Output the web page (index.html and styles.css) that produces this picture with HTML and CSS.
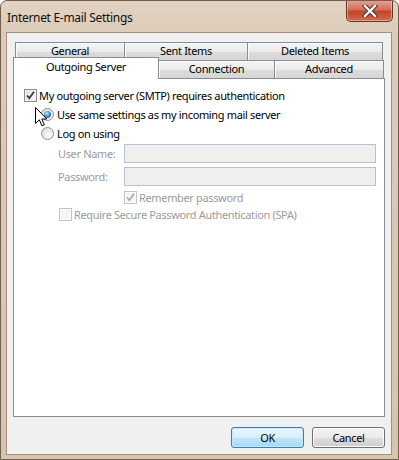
FILE: index.html
```html
<!DOCTYPE html>
<html>
<head>
<meta charset="utf-8">
<title>Internet E-mail Settings</title>
<link rel="stylesheet" href="styles.css">
</head>
<body>
<div class="window">
  <div class="titlebar">
    <span class="title">Internet E-mail Settings</span>
    <div class="close">
      <svg width="16" height="12" viewBox="0 0 16 12">
        <path d="M3 1 L13 11 M13 1 L3 11" stroke="#3a2a2a" stroke-width="4.2" stroke-linecap="square"/>
        <path d="M3 1 L13 11 M13 1 L3 11" stroke="#ffffff" stroke-width="2.4" stroke-linecap="square"/>
      </svg>
    </div>
  </div>
  <div class="client">
    <div class="tabs">
      <div class="tabrow back">
        <div class="tab t-general">General</div>
        <div class="tab t-sent">Sent Items</div>
        <div class="tab t-deleted">Deleted Items</div>
      </div>
      <div class="tabrow front">
        <div class="tab selected">Outgoing Server</div>
        <div class="tab t-conn">Connection</div>
        <div class="tab t-adv">Advanced</div>
      </div>
    </div>
    <div class="panel">
      <div class="row r-auth">
        <span class="check">
          <svg width="11" height="11" viewBox="0 0 11 11"><path d="M2 5.5 L4.3 8.2 L9 1.8" fill="none" stroke="#2b3a63" stroke-width="1.8"/></svg>
        </span>
        <span class="lbl">My outgoing server (SMTP) requires authentication</span>
      </div>
      <div class="row r-radio">
        <span class="radio on"><span class="dot"></span></span>
        <span class="lbl">Use same settings as my incoming mail server</span>
      </div>
      <div class="row r-radio">
        <span class="radio"></span>
        <span class="lbl">Log on using</span>
      </div>
      <div class="row r-field r-user">
        <span class="flabel">User Name:</span>
        <span class="input"></span>
      </div>
      <div class="row r-field r-pass">
        <span class="flabel">Password:</span>
        <span class="input"></span>
      </div>
      <div class="row r-small r-remember">
        <span class="check disabled">
          <svg width="11" height="11" viewBox="0 0 11 11"><path d="M2 5.5 L4.3 8.2 L9 1.8" fill="none" stroke="#a9a9a9" stroke-width="1.6"/></svg>
        </span>
        <span class="lbl dim">Remember password</span>
      </div>
      <div class="row r-small r-spa">
        <span class="check disabled"></span>
        <span class="lbl dim">Require Secure Password Authentication (SPA)</span>
      </div>
    </div>
    <div class="buttons">
      <div class="btn default">OK</div>
      <div class="btn">Cancel</div>
    </div>
  </div>
  <svg class="cursor" width="13" height="20" viewBox="0 0 13 20">
    <path d="M0.5 0.5 L0.5 16.5 L4.3 12.8 L6.9 18.8 L9.3 17.8 L6.8 12 L11.8 12 Z" fill="#ffffff" stroke="#000000" stroke-width="1" stroke-linejoin="miter"/>
  </svg>
</div>
</body>
</html>
```

FILE: styles.css
```css
* { box-sizing: border-box; }
html, body { margin: 0; padding: 0; background: #ffffff; }
body {
  font-family: "Noto Sans", "Open Sans", sans-serif;
  font-size: 11px;
  letter-spacing: -0.35px;
  color: #000000;
}
.window {
  position: relative;
  width: 399px;
  height: 460px;
  display: flex;
  flex-direction: column;
  padding: 0 6px 4px 5px;
  border-radius: 7px 7px 0 0;
  border: 1px solid #6f6152;
  background:
    linear-gradient(to bottom, #e2d3c2 0px, #dccbb8 32px, #d7c4ae 100%);
  overflow: hidden;
}
.titlebar {
  position: relative;
  height: 31px;
  display: flex;
  align-items: center;
  padding-left: 1px;
}
.title {
  font-size: 12px;
  letter-spacing: -0.3px;
  color: #111;
  margin-top: 2px;
}
.close {
  position: absolute;
  right: -1px;
  top: -1px;
  width: 47px;
  height: 22px;
  border: 1px solid #5b3a30;
  border-top: none;
  border-radius: 0 0 5px 5px;
  background: linear-gradient(to bottom, #e8a393 0%, #d3705a 45%, #c4442b 55%, #cf6b4d 100%);
  box-shadow: inset 0 0 0 1px rgba(255,220,200,0.5);
  display: flex;
  align-items: center;
  justify-content: center;
}
.client {
  flex: 1;
  background: #f0f0f0;
  border: 1px solid #a3917e;
  padding: 9px 6px 0 6px;
  display: flex;
  flex-direction: column;
}
.tabs {
  height: 36px;
  display: flex;
  flex-direction: column;
}
.tabrow {
  display: flex;
  height: 18px;
}
.tabrow.back { padding-left: 2px; }
.tabrow.front { align-items: flex-end; }
.tab {
  height: 18px;
  border: 1px solid #898c95;
  border-bottom: none;
  background: linear-gradient(to bottom, #f4f4f4 0%, #ebebeb 50%, #dcdcdc 51%, #d6d6d6 100%);
  box-shadow: inset 1px 1px 0 #fbfbfb;
  text-align: center;
  line-height: 16px;
  margin-left: -1px;
  flex: none;
}
.tabrow .tab:first-child { margin-left: 0; }
.t-general { width: 110px; }
.t-sent { width: 124px; }
.t-deleted { width: 136px; }
.t-conn { width: 117px; }
.t-adv { width: 110px; }
.tab.selected {
  width: 146px;
  height: 22px;
  margin-bottom: -1px;
  background: #ffffff;
  box-shadow: none;
  position: relative;
  z-index: 2;
  line-height: 18px;
}
.panel {
  height: 339px;
  background: #ffffff;
  border: 1px solid #898c95;
  padding: 7px 0 0 10px;
  display: flex;
  flex-direction: column;
  position: relative;
  z-index: 1;
}
.row {
  display: flex;
  align-items: center;
  height: 19px;
}
.r-radio { padding-left: 17px; }
.r-field { padding-left: 34px; height: 19px; }
.r-user { margin-top: 1px; }
.r-pass { margin-top: 4px; }
.r-small { height: 17px; }
.r-remember { margin-top: 3px; padding-left: 100px; }
.r-spa { padding-left: 35px; }
.check {
  width: 13px;
  height: 13px;
  border: 1px solid #8e8f8f;
  background: linear-gradient(135deg, #d9dadb 0%, #f3f3f3 60%, #fbfbfb 100%);
  box-shadow: inset 0 0 0 1px #f2f2f2;
  display: flex;
  align-items: center;
  justify-content: center;
  flex: none;
  margin-right: 2px;
}
.check.disabled {
  border-color: #c3c3c3;
  background: #f4f4f4;
  box-shadow: inset 0 0 0 1px #fbfbfb;
}
.radio {
  width: 13px;
  height: 13px;
  border-radius: 50%;
  border: 1px solid #8e8f8f;
  background: radial-gradient(circle at 65% 70%, #fdfdfd 0%, #e8e8e8 55%, #cfcfcf 100%);
  display: flex;
  align-items: center;
  justify-content: center;
  flex: none;
  margin-right: 3px;
}
.radio .dot {
  width: 7px;
  height: 7px;
  border-radius: 50%;
  background: radial-gradient(circle at 40% 35%, #bfe6fb 0%, #3b8ad2 50%, #1c4f8a 100%);
}
.lbl { white-space: nowrap; }
.lbl.dim, .flabel { color: #9b9b9b; }
.flabel { width: 66px; flex: none; }
.input {
  width: 252px;
  height: 19px;
  border: 1px solid #b6c2d2;
  background: #efefef;
  flex: none;
}
.buttons {
  display: flex;
  justify-content: flex-end;
  gap: 8px;
  margin-top: 10px;
}
.btn {
  width: 73px;
  height: 21px;
  border: 1px solid #707070;
  border-radius: 3px;
  background: linear-gradient(to bottom, #f2f2f2 0%, #ebebeb 50%, #dddddd 51%, #cfcfcf 100%);
  box-shadow: inset 0 0 0 1px #fcfcfc;
  text-align: center;
  line-height: 19px;
}
.btn.default {
  border-color: #3c7fb1;
  background: linear-gradient(to bottom, #eaf6fd 0%, #d9f0fc 50%, #bee6fd 51%, #a7d9f5 100%);
  box-shadow: inset 0 0 0 1px #c6eaff;
}
.cursor {
  position: absolute;
  left: 34px;
  top: 106px;
  z-index: 5;
}
```
